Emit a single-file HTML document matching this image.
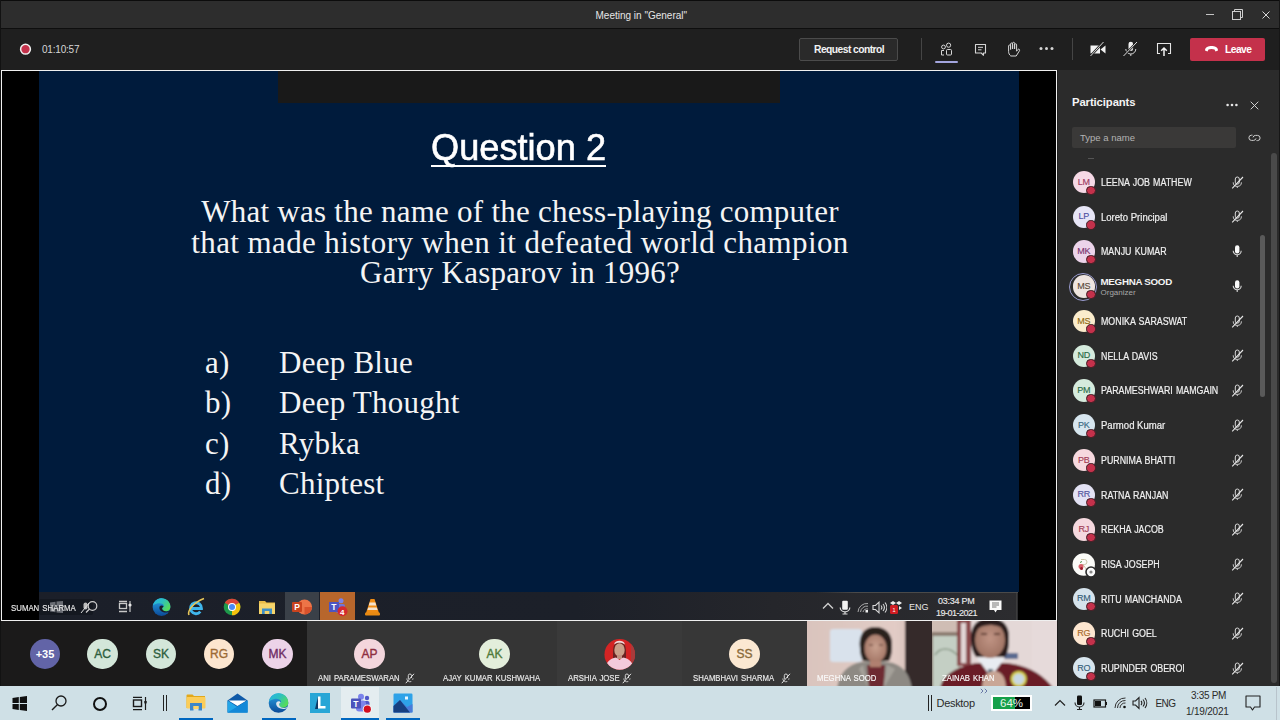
<!DOCTYPE html>
<html><head><meta charset="utf-8">
<style>
*{margin:0;padding:0;box-sizing:border-box}
html,body{width:1280px;height:720px;overflow:hidden;background:#1f1f1f;font-family:"Liberation Sans",sans-serif}
.a{position:absolute}
#title{left:0;top:0;width:1280px;height:28px;background:#2d2d2d;border-top:1px solid #0c0c0c}
#tbar{left:0;top:28px;width:1280px;height:42px;background:#1f1f1f;border-top:1px solid #0e0e0e}
#screen{left:1px;top:70px;width:1056px;height:551px;border:1px solid #f0f0f0;background:#000}
#navy{left:37px;top:0;width:980px;height:521px;background:#001b3c}
#darkrect{left:276px;top:0;width:502px;height:32px;background:#191919}
#panel{left:1058px;top:70px;width:222px;height:616px;background:#2b2b2b}
#gallery{left:0;top:621px;width:1058px;height:65px;background:#1b1a1a}
#wtb{left:0;top:686px;width:1280px;height:34px;background:#cfe0e6}
.t{position:absolute;white-space:nowrap}
.q{font-family:"Liberation Serif",serif;font-size:31px;line-height:31px;color:#f4f4f4;letter-spacing:0.25px}
</style></head><body>
<div id="title" class="a"></div>
<div id="tbar" class="a"></div>

<div class="t" style="left:595.5px;top:9.5px;font-size:10px;line-height:12px;color:#e6e6e6">Meeting in "General"</div>
<div class="a" style="left:1206px;top:13.5px;width:8px;height:1.3px;background:#c4c4c4"></div>
<svg class="a" style="left:1231px;top:8px" width="14" height="13"><rect x="1.5" y="3.5" width="8" height="8" fill="none" stroke="#cfcfcf" stroke-width="1"/><path d="M3.5 3.5V1.5H11.5V9.5H9.5" fill="none" stroke="#cfcfcf" stroke-width="1"/></svg>
<svg class="a" style="left:1261.5px;top:10.5px" width="8" height="8"><path d="M0.5 0.5L7.5 7.5M7.5 0.5L0.5 7.5" stroke="#d8d8d8" stroke-width="1"/></svg>
<!-- toolbar -->
<svg class="a" style="left:19px;top:43px" width="13" height="13"><circle cx="6.5" cy="6.2" r="4.9" fill="#c4314b" stroke="#f0f0f0" stroke-width="1.5"/></svg>
<div class="t" style="left:42px;top:44px;font-size:10px;line-height:11px;color:#d6d6d6;letter-spacing:-0.2px">01:10:57</div>
<div class="a" style="left:799px;top:38px;width:99px;height:23px;border:1px solid #4b4b4b;background:#2a2a2a;border-radius:2px"></div>
<div class="t" style="left:814px;top:43.5px;font-size:10.3px;line-height:12px;color:#f2f2f2;font-weight:bold;letter-spacing:-0.55px">Request control</div>
<div class="a" style="left:921px;top:38px;width:1px;height:22px;background:#454545"></div>
<svg class="a" style="left:939px;top:41px" width="15" height="16"><circle cx="4.5" cy="6" r="1.9" fill="none" stroke="#d6d6d6" stroke-width="1"/><circle cx="9.6" cy="4.2" r="2.1" fill="none" stroke="#d6d6d6" stroke-width="1"/><path d="M5 9.5H2.5V14H5" fill="none" stroke="#d6d6d6" stroke-width="1"/><rect x="7.5" y="8.5" width="5" height="5.5" rx="1" fill="none" stroke="#d6d6d6" stroke-width="1"/></svg>
<div class="a" style="left:935px;top:61px;width:23px;height:2px;background:#a3a5de;border-radius:1px"></div>
<svg class="a" style="left:973px;top:42px" width="15" height="15"><path d="M2.5 2.5H12.5V11H10.5V13.3L8.3 11H2.5z" fill="none" stroke="#d6d6d6" stroke-width="1.1" stroke-linejoin="round"/><path d="M5 5.3H10M5 7.8H8.5" stroke="#d6d6d6" stroke-width="1"/></svg>
<svg class="a" style="left:1006px;top:41px" width="15" height="16"><path d="M4.8 15C3.3 13.8 2.6 12.3 2.6 10.5V5a1 1 0 0 1 2 0V8.5V3a1 1 0 0 1 2 0V8V2.3a1 1 0 0 1 2 0V8V3.8a1 1 0 0 1 2 0V10.2L12 8.4a1 1 0 0 1 1.5 1.3L10.2 15z" fill="none" stroke="#d6d6d6" stroke-width="1" stroke-linejoin="round"/></svg>
<svg class="a" style="left:1039px;top:46px" width="15" height="5"><circle cx="2" cy="2.5" r="1.5" fill="#d6d6d6"/><circle cx="7.5" cy="2.5" r="1.5" fill="#d6d6d6"/><circle cx="13" cy="2.5" r="1.5" fill="#d6d6d6"/></svg>
<div class="a" style="left:1072px;top:38px;width:1px;height:22px;background:#454545"></div>
<svg class="a" style="left:1089px;top:41px" width="18" height="16"><path d="M1.5 4.5H11V12.5H1.5z" fill="#f2f2f2"/><path d="M11.5 8.5L16.5 4.5V12.5z" fill="#f2f2f2"/><path d="M1.5 15L14.5 1" stroke="#1f1f1f" stroke-width="2.4"/><path d="M1.5 15L14.5 1" stroke="#f2f2f2" stroke-width="0.9"/></svg>
<svg class="a" style="left:1122px;top:41px" width="18" height="16"><rect x="6.5" y="0.8" width="4.6" height="9.2" rx="2.3" fill="#f2f2f2"/><path d="M3.8 8a5 5 0 0 0 10 0" fill="none" stroke="#d6d6d6" stroke-width="1"/><path d="M8.8 13V15" stroke="#d6d6d6" stroke-width="1"/><path d="M1.5 15L15 1" stroke="#1f1f1f" stroke-width="2.2"/><path d="M1.5 15L15 1" stroke="#f2f2f2" stroke-width="0.9"/></svg>
<svg class="a" style="left:1156px;top:42px" width="16" height="15"><path d="M4 11.5H1.5V1.5H14.5V11.5H12" fill="none" stroke="#e6e6e6" stroke-width="1.1"/><path d="M8 14V6M5.2 8.8L8 6L10.8 8.8" fill="none" stroke="#f5f5f5" stroke-width="1.5"/></svg>
<div class="a" style="left:1190px;top:38px;width:75px;height:23px;background:#c4314b;border-radius:2px"></div>
<svg class="a" style="left:1204px;top:45px" width="15" height="8"><path d="M1 5.5C1 2 4.5 1 7.5 1S14 2 14 5.5L11.5 6.5L10.5 4.5C9 3.8 6 3.8 4.5 4.5L3.5 6.5z" fill="#fff"/></svg>
<div class="t" style="left:1225px;top:43.5px;font-size:10.3px;line-height:12px;color:#fff;font-weight:bold;letter-spacing:-0.55px">Leave</div>
<div id="screen" class="a">
  <div id="navy" class="a"></div>
  <div id="darkrect" class="a"></div>
</div>

<div class="t" style="left:431px;top:128px;font-size:37.5px;line-height:38px;color:#fff;-webkit-text-stroke:0.6px #fff;transform:scaleX(0.965);transform-origin:0 0">Question 2</div>
<div class="a" style="left:431px;top:165px;width:175px;height:2px;background:#fff"></div>
<div class="t q" style="left:0;width:1040px;text-align:center;top:196.4px">What was the name of the chess-playing computer</div>
<div class="t q" style="left:0;width:1040px;text-align:center;top:226.8px;letter-spacing:0.4px">that made history when it defeated world champion</div>
<div class="t q" style="left:0;width:1040px;text-align:center;top:256.5px">Garry Kasparov in 1996?</div>
<div class="t q" style="left:205px;top:346.7px">a)</div><div class="t q" style="left:279px;top:346.7px">Deep Blue</div>
<div class="t q" style="left:205px;top:387.3px">b)</div><div class="t q" style="left:279px;top:387.3px">Deep Thought</div>
<div class="t q" style="left:205px;top:427.7px">c)</div><div class="t q" style="left:279px;top:427.7px">Rybka</div>
<div class="t q" style="left:205px;top:468.3px">d)</div><div class="t q" style="left:279px;top:468.3px">Chiptest</div>

<!-- screen taskbar -->
<div class="a" style="left:39px;top:592px;width:979px;height:28px;background:linear-gradient(to right,#1b1f29 0%,#1c2029 55%,#25262b 75%,#2c2c2f 100%)"></div>
<div class="a" style="left:1016px;top:592px;width:1px;height:28px;background:#3c3c3c"></div>
<div class="a" style="left:816px;top:592px;width:202px;height:1px;background:linear-gradient(to right,rgba(70,70,70,0),#4a4a4a 20%,#4a4a4a)"></div>
<!-- name label -->
<div class="a" style="left:39px;top:599px;width:54px;height:16px;background:#141820;border-radius:2px"></div>
<svg class="a" style="left:50px;top:601px" width="13" height="12"><path d="M0 1.5L5.5 0.8V5.6H0ZM6.5 0.6L13 0V5.6H6.5ZM0 6.4H5.5V11.2L0 10.5ZM6.5 6.4H13V12L6.5 11.4Z" fill="#6b6e75"/></svg>
<div class="t" style="left:10.5px;top:602.5px;font-size:9px;line-height:11px;-webkit-text-stroke:0.15px currentColor;color:#e8e8e8;letter-spacing:0;word-spacing:1px;transform:scaleX(0.87);transform-origin:0 0">SUMAN SHARMA</div>
<svg class="a" style="left:80px;top:600px" width="18" height="15"><circle cx="12.5" cy="6" r="4.3" fill="none" stroke="#cfcfcf" stroke-width="1.2"/><path d="M9.5 9L6 12.5" stroke="#cfcfcf" stroke-width="1.3"/><path d="M3.5 4.5a2 2 0 0 1 4 0v3a2 2 0 0 1-4 0z" fill="#bbb"/><path d="M1 13L9 3" stroke="#ddd" stroke-width="1"/></svg>
<!-- task view -->
<svg class="a" style="left:118px;top:600px" width="14" height="13"><path d="M1 1.5H9M1 11.5H9" stroke="#c8c8c8" stroke-width="1.3"/><rect x="1.5" y="3.5" width="7" height="5" fill="none" stroke="#c8c8c8" stroke-width="1.3"/><path d="M12 1V12" stroke="#c8c8c8" stroke-width="1.2"/><circle cx="12" cy="5" r="1.6" fill="#e8e8e8"/></svg>
<!-- edge -->
<svg class="a" style="left:152px;top:597.5px" width="19" height="18.2" viewBox="0 0 21.4 20.4"><defs><linearGradient id="ega" x1="0" y1="0" x2="0" y2="1"><stop offset="0" stop-color="#2aa6e6"/><stop offset="1" stop-color="#0b4a98"/></linearGradient><linearGradient id="egb" x1="0" y1="0" x2="1" y2="0.6"><stop offset="0" stop-color="#27b4e4"/><stop offset="0.5" stop-color="#2cc0c0"/><stop offset="1" stop-color="#56dc5a"/></linearGradient></defs><circle cx="10.7" cy="10.2" r="10" fill="url(#ega)"/><path d="M1 8.5C2.5 3.2 6.3 0.2 10.7 0.2C16.5 0.2 20.7 4.6 20.7 9.8C20.7 13.2 18.2 15 15.3 15C12.3 15 10.8 13.2 11.4 11.6C12 10 13.6 9.8 13.3 8.3C12.8 6.3 9.5 5.4 6.5 6C4.2 6.5 2.3 7.3 1 8.5z" fill="url(#egb)"/><path d="M8.3 10.8C8.3 9.3 9.4 8.3 10.8 8.3C12 8.3 12.8 9 13 9.8C11.8 10.4 11.2 11.2 11.4 12.2C11.9 14.3 14.3 15.3 16.5 15.2C18 15.1 19.4 14.6 20.3 13.8C19.6 15.2 18.2 16.1 16.5 16.2C12.3 16.5 8.3 14.5 8.3 10.8z" fill="#1b1f29"/></svg>
<!-- ie -->
<svg class="a" style="left:187px;top:597px" width="19" height="20"><path d="M4 11.5h10.5a5.5 5.5 0 1 0 -1.2 3.2" fill="none" stroke="#3fb6ec" stroke-width="2.8"/><path d="M2 18C0 14 7 5 17 1.5" fill="none" stroke="#e7c75a" stroke-width="1.6"/></svg>
<!-- chrome -->
<svg class="a" style="left:223px;top:598px" width="18" height="18"><circle cx="9" cy="9" r="8.3" fill="#1e9a4b"/><path d="M9 9L1.8 4.8A8.3 8.3 0 0 1 16.2 4.8Z" fill="#db4437"/><path d="M9 9L16.2 4.8A8.3 8.3 0 0 1 9 17.3Z" fill="#f4c20d"/><circle cx="9" cy="9" r="4" fill="#fff"/><circle cx="9" cy="9" r="3" fill="#4a8af4"/></svg>
<!-- explorer -->
<svg class="a" style="left:259px;top:600px" width="16" height="14"><path d="M0 1h6l1.5 1.5H16V14H0z" fill="#e9bc48"/><rect x="0" y="3.5" width="16" height="10.5" fill="#f5d46b"/><path d="M3 14V8.5H13V14H10.3V11H5.7V14z" fill="#3e8fc7"/></svg>
<!-- powerpoint -->
<div class="a" style="left:285px;top:592px;width:34px;height:28px;background:#3a4048"></div>
<svg class="a" style="left:291px;top:599px" width="22" height="16"><circle cx="13.5" cy="8" r="7.6" fill="#ed7447"/><path d="M13.5 8H21A7.6 7.6 0 0 1 13.5 15.6z" fill="#d9522c"/><rect x="1" y="3" width="10" height="10" rx="1" fill="#c9431e"/><text x="3.2" y="11.3" font-size="8.5" font-weight="bold" fill="#fff" font-family="Liberation Sans">P</text></svg>
<!-- teams -->
<div class="a" style="left:320px;top:592px;width:35px;height:28px;background:#b7662c"></div>
<svg class="a" style="left:327px;top:598px" width="22" height="19"><circle cx="14" cy="2.8" r="2.5" fill="#7b83eb"/><rect x="9" y="6" width="9" height="9" rx="2" fill="#6f77d8"/><rect x="2" y="4" width="10" height="10" fill="#4d55c1"/><text x="4.2" y="12.2" font-size="8.5" font-weight="bold" fill="#fff" font-family="Liberation Sans">T</text><circle cx="15.5" cy="13.3" r="5" fill="#d42a2e"/><text x="13" y="16.6" font-size="8" font-weight="bold" fill="#fff" font-family="Liberation Sans">4</text></svg>
<!-- vlc -->
<svg class="a" style="left:365px;top:598px" width="15" height="18"><path d="M5.5 1H9.5L14 15H1z" fill="#f08c14"/><path d="M4.6 4.5H10.4L11.2 7.5H3.8zM3.2 9.5H11.8L12.6 12H2.4z" fill="#f3e3cf"/><rect x="0" y="14.5" width="15" height="3" rx="1" fill="#e88a12"/></svg>
<!-- tray -->
<svg class="a" style="left:822px;top:602px" width="12" height="8"><path d="M1 6.5L6 1.5L11 6.5" fill="none" stroke="#cfcfcf" stroke-width="1.3"/></svg>
<svg class="a" style="left:839px;top:600px" width="12" height="15"><rect x="3.2" y="0.8" width="5.6" height="9" rx="1" fill="#f2f2f2"/><path d="M1.2 7.5a4.8 4.3 0 0 0 9.6 0" fill="none" stroke="#d8d8d8" stroke-width="1.2"/><path d="M6 12V13.5M3.5 14H8.5" stroke="#d8d8d8" stroke-width="1.2"/></svg>
<svg class="a" style="left:857px;top:602px" width="12" height="11"><path d="M1 10a9 9 0 0 1 10 -8.5M3.5 10a6.5 6.5 0 0 1 7.5 -5.8M6 10a4 4 0 0 1 5 -3" fill="none" stroke="#aaa" stroke-width="1"/><rect x="8.5" y="8" width="2.5" height="2.5" fill="#eee"/></svg>
<svg class="a" style="left:872px;top:601px" width="15" height="13"><path d="M1 4.5H3.5L7 1.2V11.8L3.5 8.5H1z" fill="none" stroke="#d9d9d9" stroke-width="1.1"/><path d="M9 4.5a3 3 0 0 1 0 4M11 3a5.5 5.5 0 0 1 0 7M13 1.5a8 8 0 0 1 0 10" fill="none" stroke="#d9d9d9" stroke-width="1.1"/></svg>
<svg class="a" style="left:889px;top:600px" width="14" height="15"><path d="M4 1L7 3L4 5L1 3zM10 1L13 3L10 5L7 3zM10 6L13 8L10 10z" fill="#eee"/><rect x="1" y="5" width="8" height="9" rx="1.5" fill="#d01c22"/><text x="3.6" y="11.8" font-size="5.5" fill="#fff" font-family="Liberation Sans">1</text></svg>
<div class="t" style="left:909px;top:602px;font-size:9px;line-height:11px;color:#e8e8e8">ENG</div>
<div class="t" style="left:938px;top:595.8px;font-size:9px;line-height:11px;-webkit-text-stroke:0.15px currentColor;color:#e8e8e8;letter-spacing:-0.25px">03:34 PM</div>
<div class="t" style="left:936px;top:608px;font-size:9px;line-height:11px;-webkit-text-stroke:0.15px currentColor;color:#e8e8e8;letter-spacing:-0.5px">19-01-2021</div>
<svg class="a" style="left:989px;top:600px" width="13" height="14"><path d="M0.5 0.5H12.5V10H8L6.5 12.5L5 10H0.5z" fill="#fafafa"/><path d="M3 3H10M3 5H10M3 7H7.5" stroke="#777" stroke-width="1"/></svg>
<div id="panel" class="a"></div>
<div class="t" style="left:1072px;top:95.3px;font-size:11.3px;line-height:14px;color:#f4f4f4;font-weight:bold;letter-spacing:-0.1px">Participants</div>
<svg class="a" style="left:1226px;top:103px" width="12" height="4"><circle cx="1.6" cy="2" r="1.3" fill="#e6e6e6"/><circle cx="6" cy="2" r="1.3" fill="#e6e6e6"/><circle cx="10.4" cy="2" r="1.3" fill="#e6e6e6"/></svg>
<svg class="a" style="left:1250px;top:101px" width="9" height="9"><path d="M0.7 0.7L8.3 8.3M8.3 0.7L0.7 8.3" stroke="#cfcfcf" stroke-width="1"/></svg>
<div class="a" style="left:1072px;top:127px;width:164px;height:21px;background:#3a3938;border-radius:2px"></div>
<div class="t" style="left:1080px;top:132.2px;font-size:9.5px;line-height:11px;color:#b3b3b3">Type a name</div>
<svg class="a" style="left:1248px;top:133px" width="13" height="10"><path d="M4.5 2.2H3.5a2.6 2.6 0 0 0 0 5.2h2a2.6 2.6 0 0 0 2.5 -2" fill="none" stroke="#cfcfcf" stroke-width="1"/><path d="M8.5 7.6h1a2.6 2.6 0 0 0 0 -5.2h-2a2.6 2.6 0 0 0 -2.5 2" fill="none" stroke="#cfcfcf" stroke-width="1"/></svg>
<div class="a" style="left:1271px;top:153px;width:6px;height:530px;background:#4a4a4a;border-radius:3px"></div>
<div class="a" style="left:1260px;top:235px;width:5px;height:162px;background:#5a5a5a;border-radius:2.5px"></div>
<div class="a" style="left:1088px;top:158px;width:6px;height:1px;background:#555"></div>
<div class="a" style="left:1072.5px;top:171.0px;width:22.4px;height:22.4px;border-radius:50%;background:#f6d9e6"></div>
<div class="t" style="left:1072.5px;width:22.4px;text-align:center;top:176.7px;font-size:9px;line-height:11px;-webkit-text-stroke:0.15px currentColor;color:#9c3a62;letter-spacing:-0.2px">LM</div>
<div class="a" style="left:1086.3px;top:185.5px;width:9.4px;height:9.4px;border-radius:50%;background:#c4314b;border:1.4px solid #3d1e24"></div>
<div class="t" style="left:1100.5px;top:177.0px;font-size:10px;line-height:11px;color:#f0f0f0;letter-spacing:0;word-spacing:0.8px;transform:scaleX(0.885);transform-origin:0 0;-webkit-text-stroke:0.2px #f0f0f0">LEENA JOB MATHEW</div>
<svg class="a" style="left:1231px;top:175.7px" width="13" height="13"><rect x="4.3" y="1" width="4" height="7.2" rx="2" fill="none" stroke="#d8d8d8" stroke-width="1"/><path d="M2.2 6.3a4.1 4.1 0 0 0 8.2 0" fill="none" stroke="#c8c8c8" stroke-width="1"/><path d="M6.3 10.4V12" stroke="#c8c8c8" stroke-width="1"/><path d="M1.2 12.3L12 1" stroke="#e8e8e8" stroke-width="1.1"/></svg>
<div class="a" style="left:1072.5px;top:205.7px;width:22.4px;height:22.4px;border-radius:50%;background:#e7e5f6"></div>
<div class="t" style="left:1072.5px;width:22.4px;text-align:center;top:211.4px;font-size:9px;line-height:11px;-webkit-text-stroke:0.15px currentColor;color:#4f52a3;letter-spacing:-0.2px">LP</div>
<div class="a" style="left:1086.3px;top:220.2px;width:9.4px;height:9.4px;border-radius:50%;background:#c4314b;border:1.4px solid #3d1e24"></div>
<div class="t" style="left:1100.5px;top:211.7px;font-size:10px;line-height:11px;color:#f0f0f0;letter-spacing:0;transform:scaleX(0.955);transform-origin:0 0;-webkit-text-stroke:0.2px #f0f0f0">Loreto Principal</div>
<svg class="a" style="left:1231px;top:210.4px" width="13" height="13"><rect x="4.3" y="1" width="4" height="7.2" rx="2" fill="none" stroke="#d8d8d8" stroke-width="1"/><path d="M2.2 6.3a4.1 4.1 0 0 0 8.2 0" fill="none" stroke="#c8c8c8" stroke-width="1"/><path d="M6.3 10.4V12" stroke="#c8c8c8" stroke-width="1"/><path d="M1.2 12.3L12 1" stroke="#e8e8e8" stroke-width="1.1"/></svg>
<div class="a" style="left:1072.5px;top:240.4px;width:22.4px;height:22.4px;border-radius:50%;background:#ecd4ea"></div>
<div class="t" style="left:1072.5px;width:22.4px;text-align:center;top:246.1px;font-size:9px;line-height:11px;-webkit-text-stroke:0.15px currentColor;color:#7a3470;letter-spacing:-0.2px">MK</div>
<div class="a" style="left:1086.3px;top:254.9px;width:9.4px;height:9.4px;border-radius:50%;background:#c4314b;border:1.4px solid #3d1e24"></div>
<div class="t" style="left:1100.5px;top:246.4px;font-size:10px;line-height:11px;color:#f0f0f0;letter-spacing:0;word-spacing:0.8px;transform:scaleX(0.885);transform-origin:0 0;-webkit-text-stroke:0.2px #f0f0f0">MANJU KUMAR</div>
<svg class="a" style="left:1231px;top:245.1px" width="13" height="13"><rect x="4" y="0.3" width="4.4" height="8.2" rx="2.2" fill="#fafafa"/><path d="M2.2 5.8a4 4 0 0 0 8 0" fill="none" stroke="#d8d8d8" stroke-width="1.1"/><path d="M6.2 10V12" stroke="#d8d8d8" stroke-width="1.1"/></svg>
<div class="a" style="left:1069.2px;top:272.8px;width:28px;height:28px;border-radius:50%;border:1.3px solid #9a9cd0"></div>
<div class="a" style="left:1072.5px;top:275.2px;width:22.4px;height:22.4px;border-radius:50%;background:#efe5e0"></div>
<div class="t" style="left:1072.5px;width:22.4px;text-align:center;top:280.9px;font-size:9px;line-height:11px;-webkit-text-stroke:0.15px currentColor;color:#5c4b3c;letter-spacing:-0.2px">MS</div>
<div class="a" style="left:1086.3px;top:289.7px;width:9.4px;height:9.4px;border-radius:50%;background:#c4314b;border:1.4px solid #3d1e24"></div>
<div class="t" style="left:1100.5px;top:276.4px;font-size:9.8px;line-height:11px;color:#f4f4f4;font-weight:bold;letter-spacing:-0.3px">MEGHNA SOOD</div>
<div class="t" style="left:1100.5px;top:287.9px;font-size:8px;line-height:10px;color:#a8a8a8">Organizer</div>
<svg class="a" style="left:1231px;top:279.9px" width="13" height="13"><rect x="4" y="0.3" width="4.4" height="8.2" rx="2.2" fill="#fafafa"/><path d="M2.2 5.8a4 4 0 0 0 8 0" fill="none" stroke="#d8d8d8" stroke-width="1.1"/><path d="M6.2 10V12" stroke="#d8d8d8" stroke-width="1.1"/></svg>
<div class="a" style="left:1072.5px;top:309.9px;width:22.4px;height:22.4px;border-radius:50%;background:#fbeccc"></div>
<div class="t" style="left:1072.5px;width:22.4px;text-align:center;top:315.6px;font-size:9px;line-height:11px;-webkit-text-stroke:0.15px currentColor;color:#8f6a14;letter-spacing:-0.2px">MS</div>
<div class="a" style="left:1086.3px;top:324.4px;width:9.4px;height:9.4px;border-radius:50%;background:#c4314b;border:1.4px solid #3d1e24"></div>
<div class="t" style="left:1100.5px;top:315.9px;font-size:10px;line-height:11px;color:#f0f0f0;letter-spacing:0;word-spacing:0.8px;transform:scaleX(0.885);transform-origin:0 0;-webkit-text-stroke:0.2px #f0f0f0">MONIKA SARASWAT</div>
<svg class="a" style="left:1231px;top:314.6px" width="13" height="13"><rect x="4.3" y="1" width="4" height="7.2" rx="2" fill="none" stroke="#d8d8d8" stroke-width="1"/><path d="M2.2 6.3a4.1 4.1 0 0 0 8.2 0" fill="none" stroke="#c8c8c8" stroke-width="1"/><path d="M6.3 10.4V12" stroke="#c8c8c8" stroke-width="1"/><path d="M1.2 12.3L12 1" stroke="#e8e8e8" stroke-width="1.1"/></svg>
<div class="a" style="left:1072.5px;top:344.6px;width:22.4px;height:22.4px;border-radius:50%;background:#d5ebdd"></div>
<div class="t" style="left:1072.5px;width:22.4px;text-align:center;top:350.3px;font-size:9px;line-height:11px;-webkit-text-stroke:0.15px currentColor;color:#2a6a46;letter-spacing:-0.2px">ND</div>
<div class="a" style="left:1086.3px;top:359.1px;width:9.4px;height:9.4px;border-radius:50%;background:#c4314b;border:1.4px solid #3d1e24"></div>
<div class="t" style="left:1100.5px;top:350.6px;font-size:10px;line-height:11px;color:#f0f0f0;letter-spacing:0;word-spacing:0.8px;transform:scaleX(0.885);transform-origin:0 0;-webkit-text-stroke:0.2px #f0f0f0">NELLA DAVIS</div>
<svg class="a" style="left:1231px;top:349.3px" width="13" height="13"><rect x="4.3" y="1" width="4" height="7.2" rx="2" fill="none" stroke="#d8d8d8" stroke-width="1"/><path d="M2.2 6.3a4.1 4.1 0 0 0 8.2 0" fill="none" stroke="#c8c8c8" stroke-width="1"/><path d="M6.3 10.4V12" stroke="#c8c8c8" stroke-width="1"/><path d="M1.2 12.3L12 1" stroke="#e8e8e8" stroke-width="1.1"/></svg>
<div class="a" style="left:1072.5px;top:379.3px;width:22.4px;height:22.4px;border-radius:50%;background:#d5ebdd"></div>
<div class="t" style="left:1072.5px;width:22.4px;text-align:center;top:385.0px;font-size:9px;line-height:11px;-webkit-text-stroke:0.15px currentColor;color:#2a6a46;letter-spacing:-0.2px">PM</div>
<div class="a" style="left:1086.3px;top:393.8px;width:9.4px;height:9.4px;border-radius:50%;background:#c4314b;border:1.4px solid #3d1e24"></div>
<div class="t" style="left:1100.5px;top:385.3px;font-size:10px;line-height:11px;color:#f0f0f0;letter-spacing:0;word-spacing:0.8px;transform:scaleX(0.885);transform-origin:0 0;-webkit-text-stroke:0.2px #f0f0f0">PARAMESHWARI MAMGAIN</div>
<svg class="a" style="left:1231px;top:384.0px" width="13" height="13"><rect x="4.3" y="1" width="4" height="7.2" rx="2" fill="none" stroke="#d8d8d8" stroke-width="1"/><path d="M2.2 6.3a4.1 4.1 0 0 0 8.2 0" fill="none" stroke="#c8c8c8" stroke-width="1"/><path d="M6.3 10.4V12" stroke="#c8c8c8" stroke-width="1"/><path d="M1.2 12.3L12 1" stroke="#e8e8e8" stroke-width="1.1"/></svg>
<div class="a" style="left:1072.5px;top:414.0px;width:22.4px;height:22.4px;border-radius:50%;background:#d7e6ef"></div>
<div class="t" style="left:1072.5px;width:22.4px;text-align:center;top:419.7px;font-size:9px;line-height:11px;-webkit-text-stroke:0.15px currentColor;color:#3b6a84;letter-spacing:-0.2px">PK</div>
<div class="a" style="left:1086.3px;top:428.5px;width:9.4px;height:9.4px;border-radius:50%;background:#c4314b;border:1.4px solid #3d1e24"></div>
<div class="t" style="left:1100.5px;top:420.0px;font-size:10px;line-height:11px;color:#f0f0f0;letter-spacing:0;transform:scaleX(0.955);transform-origin:0 0;-webkit-text-stroke:0.2px #f0f0f0">Parmod Kumar</div>
<svg class="a" style="left:1231px;top:418.7px" width="13" height="13"><rect x="4.3" y="1" width="4" height="7.2" rx="2" fill="none" stroke="#d8d8d8" stroke-width="1"/><path d="M2.2 6.3a4.1 4.1 0 0 0 8.2 0" fill="none" stroke="#c8c8c8" stroke-width="1"/><path d="M6.3 10.4V12" stroke="#c8c8c8" stroke-width="1"/><path d="M1.2 12.3L12 1" stroke="#e8e8e8" stroke-width="1.1"/></svg>
<div class="a" style="left:1072.5px;top:448.8px;width:22.4px;height:22.4px;border-radius:50%;background:#f7d9df"></div>
<div class="t" style="left:1072.5px;width:22.4px;text-align:center;top:454.5px;font-size:9px;line-height:11px;-webkit-text-stroke:0.15px currentColor;color:#a33f58;letter-spacing:-0.2px">PB</div>
<div class="a" style="left:1086.3px;top:463.3px;width:9.4px;height:9.4px;border-radius:50%;background:#c4314b;border:1.4px solid #3d1e24"></div>
<div class="t" style="left:1100.5px;top:454.8px;font-size:10px;line-height:11px;color:#f0f0f0;letter-spacing:0;word-spacing:0.8px;transform:scaleX(0.885);transform-origin:0 0;-webkit-text-stroke:0.2px #f0f0f0">PURNIMA BHATTI</div>
<svg class="a" style="left:1231px;top:453.5px" width="13" height="13"><rect x="4.3" y="1" width="4" height="7.2" rx="2" fill="none" stroke="#d8d8d8" stroke-width="1"/><path d="M2.2 6.3a4.1 4.1 0 0 0 8.2 0" fill="none" stroke="#c8c8c8" stroke-width="1"/><path d="M6.3 10.4V12" stroke="#c8c8c8" stroke-width="1"/><path d="M1.2 12.3L12 1" stroke="#e8e8e8" stroke-width="1.1"/></svg>
<div class="a" style="left:1072.5px;top:483.5px;width:22.4px;height:22.4px;border-radius:50%;background:#e3e2f4"></div>
<div class="t" style="left:1072.5px;width:22.4px;text-align:center;top:489.2px;font-size:9px;line-height:11px;-webkit-text-stroke:0.15px currentColor;color:#55579f;letter-spacing:-0.2px">RR</div>
<div class="a" style="left:1086.3px;top:498.0px;width:9.4px;height:9.4px;border-radius:50%;background:#c4314b;border:1.4px solid #3d1e24"></div>
<div class="t" style="left:1100.5px;top:489.5px;font-size:10px;line-height:11px;color:#f0f0f0;letter-spacing:0;word-spacing:0.8px;transform:scaleX(0.885);transform-origin:0 0;-webkit-text-stroke:0.2px #f0f0f0">RATNA RANJAN</div>
<svg class="a" style="left:1231px;top:488.2px" width="13" height="13"><rect x="4.3" y="1" width="4" height="7.2" rx="2" fill="none" stroke="#d8d8d8" stroke-width="1"/><path d="M2.2 6.3a4.1 4.1 0 0 0 8.2 0" fill="none" stroke="#c8c8c8" stroke-width="1"/><path d="M6.3 10.4V12" stroke="#c8c8c8" stroke-width="1"/><path d="M1.2 12.3L12 1" stroke="#e8e8e8" stroke-width="1.1"/></svg>
<div class="a" style="left:1072.5px;top:518.2px;width:22.4px;height:22.4px;border-radius:50%;background:#f5d8de"></div>
<div class="t" style="left:1072.5px;width:22.4px;text-align:center;top:523.9px;font-size:9px;line-height:11px;-webkit-text-stroke:0.15px currentColor;color:#a33f58;letter-spacing:-0.2px">RJ</div>
<div class="a" style="left:1086.3px;top:532.7px;width:9.4px;height:9.4px;border-radius:50%;background:#c4314b;border:1.4px solid #3d1e24"></div>
<div class="t" style="left:1100.5px;top:524.2px;font-size:10px;line-height:11px;color:#f0f0f0;letter-spacing:0;word-spacing:0.8px;transform:scaleX(0.885);transform-origin:0 0;-webkit-text-stroke:0.2px #f0f0f0">REKHA JACOB</div>
<svg class="a" style="left:1231px;top:522.9px" width="13" height="13"><rect x="4.3" y="1" width="4" height="7.2" rx="2" fill="none" stroke="#d8d8d8" stroke-width="1"/><path d="M2.2 6.3a4.1 4.1 0 0 0 8.2 0" fill="none" stroke="#c8c8c8" stroke-width="1"/><path d="M6.3 10.4V12" stroke="#c8c8c8" stroke-width="1"/><path d="M1.2 12.3L12 1" stroke="#e8e8e8" stroke-width="1.1"/></svg>
<svg class="a" style="left:1072px;top:552.6px" width="24" height="24"><circle cx="11.75" cy="11.5" r="11.2" fill="#fbfbf8"/><path d="M9 6.5h3.5a2.5 2.5 0 0 1 0 5H9M11 11.5l3.5 5" fill="none" stroke="#c9c4a8" stroke-width="1"/><circle cx="9" cy="13.5" r="2.5" fill="#d9606a"/><circle cx="9.5" cy="15.5" r="1.5" fill="#9a1a2a"/><path d="M8.5 10l1-2" stroke="#4a8a4a" stroke-width="1"/></svg>
<svg class="a" style="left:1085px;top:566.4px" width="12" height="12"><circle cx="6" cy="6" r="5" fill="#fafafa" stroke="#2b2b2b" stroke-width="1.6"/><circle cx="6" cy="6" r="1.6" fill="#888"/></svg>
<div class="t" style="left:1100.5px;top:558.9px;font-size:10px;line-height:11px;color:#f0f0f0;letter-spacing:0;word-spacing:0.8px;transform:scaleX(0.885);transform-origin:0 0;-webkit-text-stroke:0.2px #f0f0f0">RISA JOSEPH</div>
<svg class="a" style="left:1231px;top:557.6px" width="13" height="13"><rect x="4.3" y="1" width="4" height="7.2" rx="2" fill="none" stroke="#d8d8d8" stroke-width="1"/><path d="M2.2 6.3a4.1 4.1 0 0 0 8.2 0" fill="none" stroke="#c8c8c8" stroke-width="1"/><path d="M6.3 10.4V12" stroke="#c8c8c8" stroke-width="1"/><path d="M1.2 12.3L12 1" stroke="#e8e8e8" stroke-width="1.1"/></svg>
<div class="a" style="left:1072.5px;top:587.6px;width:22.4px;height:22.4px;border-radius:50%;background:#d5e3ec"></div>
<div class="t" style="left:1072.5px;width:22.4px;text-align:center;top:593.3px;font-size:9px;line-height:11px;-webkit-text-stroke:0.15px currentColor;color:#365f7a;letter-spacing:-0.2px">RM</div>
<div class="a" style="left:1086.3px;top:602.1px;width:9.4px;height:9.4px;border-radius:50%;background:#c4314b;border:1.4px solid #3d1e24"></div>
<div class="t" style="left:1100.5px;top:593.6px;font-size:10px;line-height:11px;color:#f0f0f0;letter-spacing:0;word-spacing:0.8px;transform:scaleX(0.885);transform-origin:0 0;-webkit-text-stroke:0.2px #f0f0f0">RITU MANCHANDA</div>
<svg class="a" style="left:1231px;top:592.3px" width="13" height="13"><rect x="4.3" y="1" width="4" height="7.2" rx="2" fill="none" stroke="#d8d8d8" stroke-width="1"/><path d="M2.2 6.3a4.1 4.1 0 0 0 8.2 0" fill="none" stroke="#c8c8c8" stroke-width="1"/><path d="M6.3 10.4V12" stroke="#c8c8c8" stroke-width="1"/><path d="M1.2 12.3L12 1" stroke="#e8e8e8" stroke-width="1.1"/></svg>
<div class="a" style="left:1072.5px;top:622.4px;width:22.4px;height:22.4px;border-radius:50%;background:#fde6d0"></div>
<div class="t" style="left:1072.5px;width:22.4px;text-align:center;top:628.1px;font-size:9px;line-height:11px;-webkit-text-stroke:0.15px currentColor;color:#a86a2c;letter-spacing:-0.2px">RG</div>
<div class="a" style="left:1086.3px;top:636.9px;width:9.4px;height:9.4px;border-radius:50%;background:#c4314b;border:1.4px solid #3d1e24"></div>
<div class="t" style="left:1100.5px;top:628.4px;font-size:10px;line-height:11px;color:#f0f0f0;letter-spacing:0;word-spacing:0.8px;transform:scaleX(0.885);transform-origin:0 0;-webkit-text-stroke:0.2px #f0f0f0">RUCHI GOEL</div>
<svg class="a" style="left:1231px;top:627.1px" width="13" height="13"><rect x="4.3" y="1" width="4" height="7.2" rx="2" fill="none" stroke="#d8d8d8" stroke-width="1"/><path d="M2.2 6.3a4.1 4.1 0 0 0 8.2 0" fill="none" stroke="#c8c8c8" stroke-width="1"/><path d="M6.3 10.4V12" stroke="#c8c8c8" stroke-width="1"/><path d="M1.2 12.3L12 1" stroke="#e8e8e8" stroke-width="1.1"/></svg>
<div class="a" style="left:1072.5px;top:657.1px;width:22.4px;height:22.4px;border-radius:50%;background:#d7e5ee"></div>
<div class="t" style="left:1072.5px;width:22.4px;text-align:center;top:662.8px;font-size:9px;line-height:11px;-webkit-text-stroke:0.15px currentColor;color:#365f7a;letter-spacing:-0.2px">RO</div>
<div class="a" style="left:1086.3px;top:671.6px;width:9.4px;height:9.4px;border-radius:50%;background:#c4314b;border:1.4px solid #3d1e24"></div>
<div class="t" style="left:1100.5px;top:663.1px;font-size:10px;line-height:11px;color:#f0f0f0;letter-spacing:0;word-spacing:0.8px;transform:scaleX(0.885);transform-origin:0 0;-webkit-text-stroke:0.2px #f0f0f0">RUPINDER OBEROI</div>
<svg class="a" style="left:1231px;top:661.8px" width="13" height="13"><rect x="4.3" y="1" width="4" height="7.2" rx="2" fill="none" stroke="#d8d8d8" stroke-width="1"/><path d="M2.2 6.3a4.1 4.1 0 0 0 8.2 0" fill="none" stroke="#c8c8c8" stroke-width="1"/><path d="M6.3 10.4V12" stroke="#c8c8c8" stroke-width="1"/><path d="M1.2 12.3L12 1" stroke="#e8e8e8" stroke-width="1.1"/></svg>
<div id="gallery" class="a"></div>
<!-- gallery -->
<div class="a" style="left:0;top:621px;width:307px;height:65px;background:#1b1a1a"></div>
<div class="a" style="left:307px;top:621px;width:250px;height:65px;background:#353535"></div>
<div class="a" style="left:557px;top:621px;width:125px;height:65px;background:#3a3a3a"></div>
<div class="a" style="left:682px;top:621px;width:125px;height:65px;background:#373737"></div>
<div class="a" style="left:29.8px;top:638.5px;width:30.4px;height:30.4px;border-radius:50%;background:#6264a7"></div>
<div class="t" style="left:25.0px;width:40px;text-align:center;top:646.5px;font-size:11px;line-height:14px;color:#fff;font-weight:bold;">+35</div>
<div class="a" style="left:87.3px;top:638.5px;width:30.4px;height:30.4px;border-radius:50%;background:#d3e6d9"></div>
<div class="t" style="left:82.5px;width:40px;text-align:center;top:646.5px;font-size:12px;line-height:14px;-webkit-text-stroke:0.35px currentColor;color:#2d5e3e;">AC</div>
<div class="a" style="left:145.8px;top:638.5px;width:30.4px;height:30.4px;border-radius:50%;background:#d3e6d9"></div>
<div class="t" style="left:141.0px;width:40px;text-align:center;top:646.5px;font-size:12px;line-height:14px;-webkit-text-stroke:0.35px currentColor;color:#2d5e3e;">SK</div>
<div class="a" style="left:203.8px;top:638.5px;width:30.4px;height:30.4px;border-radius:50%;background:#fde6cf"></div>
<div class="t" style="left:199.0px;width:40px;text-align:center;top:646.5px;font-size:12px;line-height:14px;-webkit-text-stroke:0.35px currentColor;color:#9c6a34;">RG</div>
<div class="a" style="left:262.3px;top:638.5px;width:30.4px;height:30.4px;border-radius:50%;background:#ecd3e8"></div>
<div class="t" style="left:257.5px;width:40px;text-align:center;top:646.5px;font-size:12px;line-height:14px;-webkit-text-stroke:0.35px currentColor;color:#6e2d65;">MK</div>
<div class="a" style="left:354.3px;top:638.5px;width:30.4px;height:30.4px;border-radius:50%;background:#f3d6dc"></div>
<div class="t" style="left:349.5px;width:40px;text-align:center;top:646.5px;font-size:12px;line-height:14px;-webkit-text-stroke:0.35px currentColor;color:#8e2f40;">AP</div>
<div class="a" style="left:479.3px;top:638.5px;width:30.4px;height:30.4px;border-radius:50%;background:#e3eedb"></div>
<div class="t" style="left:474.5px;width:40px;text-align:center;top:646.5px;font-size:12px;line-height:14px;-webkit-text-stroke:0.35px currentColor;color:#4f7a3a;">AK</div>
<div class="a" style="left:729.3px;top:638.5px;width:30.4px;height:30.4px;border-radius:50%;background:#fbe8d2"></div>
<div class="t" style="left:724.5px;width:40px;text-align:center;top:646.5px;font-size:12px;line-height:14px;-webkit-text-stroke:0.35px currentColor;color:#8a6a3a;">SS</div>
<svg class="a" style="left:604px;top:638.5px" width="31.5" height="31"><defs><clipPath id="ac"><circle cx="15.75" cy="15.4" r="15.3"/></clipPath><filter id="ab"><feGaussianBlur stdDeviation="0.7"/></filter></defs><g clip-path="url(#ac)"><rect width="32" height="32" fill="#d42424"/><g filter="url(#ab)"><rect x="27" y="0" width="5" height="32" fill="#a83a3a"/><path d="M9 13C9 5 12 2.5 15.5 2.5S22 5 22 13V20H9z" fill="#6a2420"/><ellipse cx="15.5" cy="11" rx="5.2" ry="6.8" fill="#caa08a"/><path d="M10 5.5C11 2.5 13 1.8 15.5 1.8S20 2.5 21 5.5C19 4.2 17 3.8 15.5 3.8S12 4.2 10 5.5z" fill="#f2dada"/><rect x="13" y="16" width="5" height="4" fill="#c09080"/><path d="M1 32C1 24 6 19 12 18.5L15.5 21L19 18.5C25 19 30 24 30 32z" fill="#f3cadb"/></g></g></svg>
<div class="t" style="left:317.5px;top:673px;font-size:9px;line-height:10px;color:#ececec;letter-spacing:0;word-spacing:1px;transform:scaleX(0.86);transform-origin:0 0;-webkit-text-stroke:0.15px #ececec">ANI PARAMESWARAN</div>
<svg class="a" style="left:405px;top:673px" width="10" height="11"><path d="M3.3 6V2.6a1.6 1.6 0 0 1 3.2 0V5" fill="none" stroke="#d6d6d6" stroke-width="1"/><path d="M1.8 5.5a3.2 3.2 0 0 0 4.5 3M8 5.3a3.2 3.2 0 0 1 -0.4 1.5" fill="none" stroke="#cfcfcf" stroke-width="0.9"/><path d="M0.8 10.2L9 0.8" stroke="#e6e6e6" stroke-width="1"/></svg>
<div class="t" style="left:442.5px;top:673px;font-size:9px;line-height:10px;color:#ececec;letter-spacing:0;word-spacing:1px;transform:scaleX(0.86);transform-origin:0 0;-webkit-text-stroke:0.15px #ececec">AJAY KUMAR KUSHWAHA</div>
<div class="t" style="left:567.5px;top:673px;font-size:9px;line-height:10px;color:#ececec;letter-spacing:0;word-spacing:1px;transform:scaleX(0.86);transform-origin:0 0;-webkit-text-stroke:0.15px #ececec">ARSHIA JOSE</div>
<svg class="a" style="left:622px;top:673px" width="10" height="11"><path d="M3.3 6V2.6a1.6 1.6 0 0 1 3.2 0V5" fill="none" stroke="#d6d6d6" stroke-width="1"/><path d="M1.8 5.5a3.2 3.2 0 0 0 4.5 3M8 5.3a3.2 3.2 0 0 1 -0.4 1.5" fill="none" stroke="#cfcfcf" stroke-width="0.9"/><path d="M0.8 10.2L9 0.8" stroke="#e6e6e6" stroke-width="1"/></svg>
<div class="t" style="left:692.5px;top:673px;font-size:9px;line-height:10px;color:#ececec;letter-spacing:0;word-spacing:1px;transform:scaleX(0.86);transform-origin:0 0;-webkit-text-stroke:0.15px #ececec">SHAMBHAVI SHARMA</div>
<svg class="a" style="left:781px;top:673px" width="10" height="11"><path d="M3.3 6V2.6a1.6 1.6 0 0 1 3.2 0V5" fill="none" stroke="#d6d6d6" stroke-width="1"/><path d="M1.8 5.5a3.2 3.2 0 0 0 4.5 3M8 5.3a3.2 3.2 0 0 1 -0.4 1.5" fill="none" stroke="#cfcfcf" stroke-width="0.9"/><path d="M0.8 10.2L9 0.8" stroke="#e6e6e6" stroke-width="1"/></svg>

<svg class="a" style="left:807px;top:621px" width="125" height="65">
<defs><filter id="bl" x="-5%" y="-5%" width="110%" height="110%"><feGaussianBlur stdDeviation="1.2"/></filter>
<radialGradient id="mf" cx="0.5" cy="0.45" r="0.6"><stop offset="0" stop-color="#c8a08e"/><stop offset="1" stop-color="#a27464"/></radialGradient>
<linearGradient id="mwall" x1="0" y1="0" x2="1" y2="0"><stop offset="0" stop-color="#d9c4bd"/><stop offset="0.7" stop-color="#e2ccc6"/><stop offset="1" stop-color="#c8aea6"/></linearGradient></defs>
<g filter="url(#bl)">
<rect x="-3" y="-3" width="131" height="71" fill="url(#mwall)"/>
<rect x="23" y="8" width="32" height="33" rx="3" fill="#d9e2ec"/>
<rect x="98" y="-3" width="30" height="71" fill="#342c2c"/>
<path d="M30 68C32 52 40 44 54 41L70 39L86 42C98 46 103 55 105 68z" fill="#8d8983"/>
<path d="M60 44L62 68H77L78 44z" fill="#6e2a32"/>
<path d="M56 44L62 68L52 48z" fill="#a5a19a"/>
<path d="M80 44L76 68L88 48z" fill="#a5a19a"/>
<path d="M53 28C51 14 57 6 68 6C80 6 86 14 85 26C85 32 84 36 82 40L56 40C54 36 53 32 53 28z" fill="#2a201f"/>
<ellipse cx="68.5" cy="27.5" rx="11" ry="14" fill="url(#mf)"/>
<path d="M56 22C57 12 62 9 69 9C76 9 81 12 82 21C78 15 73 13 68 13C62 13 58 16 56 22z" fill="#2a201f"/>
<path d="M62 24h4M72 24h4" stroke="#5a3a30" stroke-width="1.2"/>
<rect x="63" y="40" width="11" height="6" fill="#b08070"/>
</g></svg>

<div class="t" style="left:817px;top:673px;font-size:9px;line-height:10px;color:#fafafa;letter-spacing:0;word-spacing:1px;transform:scaleX(0.86);transform-origin:0 0;-webkit-text-stroke:0.15px #fafafa">MEGHNA SOOD</div>
<svg class="a" style="left:932px;top:621px" width="125" height="65">
<defs><radialGradient id="zf" cx="0.5" cy="0.45" r="0.6"><stop offset="0" stop-color="#c09484"/><stop offset="1" stop-color="#9c7060"/></radialGradient></defs>
<g filter="url(#bl)">
<rect x="-3" y="-3" width="131" height="71" fill="#e4d8d7"/>
<rect x="-3" y="-3" width="32" height="15" fill="#cfbdb4"/>
<rect x="-3" y="11" width="31" height="57" fill="#8a7a70"/>
<rect x="1" y="15" width="26" height="53" fill="#c4cfc4"/>
<path d="M3 34C8 26 18 26 25 34" fill="none" stroke="#8a9a88" stroke-width="1.5"/>
<rect x="25" y="-3" width="14" height="48" fill="#8a4a4c"/>
<rect x="29" y="2" width="5" height="40" fill="#e2d6d6"/>
<rect x="100" y="-3" width="28" height="71" fill="#e6dada"/>
<rect x="72" y="32" width="14" height="6" fill="#5a6a90"/>
<path d="M8 68C10 54 24 46 44 42L74 42C96 44 112 54 122 68z" fill="#6a1c26"/>
<path d="M45 37L59 56L73 37z" fill="#e8ecf2"/>
<rect x="56" y="48" width="5" height="6" fill="#4a6a7a"/>
<path d="M39 20C38 4 46 -3 58 -3C70 -3 78 4 77 18C77 26 76 32 73 36H44C41 32 39 26 39 20z" fill="#2a1f1e"/>
<ellipse cx="58" cy="19" rx="15" ry="18" fill="url(#zf)"/>
<path d="M43 10C45 2 50 -1 58 -1C66 -1 72 2 74 10C70 6 64 4 58 4C52 4 47 6 43 10z" fill="#2a1f1e"/>
<path d="M49 13h6M62 13h6" stroke="#4a2a22" stroke-width="1.3"/>
<path d="M50 68C50 56 55 50 62 50C69 50 74 56 74 68z" fill="#c9a696"/>
<circle cx="86.7" cy="58" r="8" fill="#d6d04e"/><circle cx="86.7" cy="58" r="5.6" fill="#c8d8e4"/>
</g></svg>

<div class="t" style="left:942px;top:673px;font-size:9px;line-height:10px;color:#fafafa;letter-spacing:0;word-spacing:1px;transform:scaleX(0.86);transform-origin:0 0;-webkit-text-stroke:0.15px #fafafa">ZAINAB KHAN</div>

<div class="a" style="left:0;top:0;width:1px;height:686px;background:#121212"></div>
<div class="a" style="left:1279px;top:0;width:1px;height:686px;background:#161616"></div>
<div id="wtb" class="a"></div>
<!-- windows taskbar -->
<svg class="a" style="left:12px;top:696px" width="16" height="15"><path d="M0.5 2L6.8 1.1V7H0.5zM7.8 1L15 0V7H7.8zM0.5 8H6.8V13.9L0.5 13zM7.8 8H15V15L7.8 14z" fill="#101010"/></svg>
<svg class="a" style="left:50px;top:694px" width="18" height="18"><circle cx="11" cy="7" r="5" fill="none" stroke="#1a1a1a" stroke-width="1.3"/><path d="M7.3 10.7L2 16" stroke="#1a1a1a" stroke-width="1.4"/></svg>
<svg class="a" style="left:92px;top:696px" width="16" height="16"><circle cx="8" cy="8" r="6" fill="none" stroke="#111" stroke-width="2"/></svg>
<svg class="a" style="left:132px;top:696px" width="16" height="15"><path d="M1 1.3H10M1 13.7H10" stroke="#1a1a1a" stroke-width="1.3"/><rect x="1.5" y="4" width="8" height="6.5" fill="none" stroke="#1a1a1a" stroke-width="1.4"/><path d="M13.5 1V14" stroke="#1a1a1a" stroke-width="1.2"/><rect x="12.3" y="5" width="2.4" height="2.4" fill="#1a1a1a"/></svg>
<div class="a" style="left:163px;top:695px;width:1px;height:16px;background:#222"></div>
<div class="a" style="left:166px;top:695px;width:1px;height:16px;background:#222"></div>
<svg class="a" style="left:186px;top:694px" width="20" height="17"><path d="M0.5 1.5a1 1 0 0 1 1 -1h5l1.5 1.5H19V14H0.5z" fill="#e2a81a"/><rect x="0.5" y="3" width="19" height="11.5" rx="1" fill="#fbcd5a"/><path d="M4 16.5V9H16V16.5H12.5V12H7.5V16.5z" fill="#3c87c9"/><rect x="7.5" y="12" width="5" height="3" fill="#fcd468"/></svg>
<svg class="a" style="left:227px;top:693px" width="21" height="20"><path d="M0.5 7.5L10.5 0.5L20.5 7.5V19.5H0.5z" fill="#0f5aa8"/><path d="M1.5 7.5H19.5L10.5 13z" fill="#ffffff"/><path d="M0.5 7.5L10.5 14L20.5 7.5V19.5H0.5z" fill="#23a6e8"/><path d="M0.5 19.5L20.5 7.5V19.5z" fill="#1388d8"/></svg>
<svg class="a" style="left:268px;top:693px" width="21" height="20" viewBox="0 0 21.4 20.4"><defs><linearGradient id="eg2a" x1="0" y1="0" x2="0" y2="1"><stop offset="0" stop-color="#2aa6e6"/><stop offset="1" stop-color="#0b4a98"/></linearGradient><linearGradient id="eg2b" x1="0" y1="0" x2="1" y2="0.6"><stop offset="0" stop-color="#27b4e4"/><stop offset="0.5" stop-color="#2cc0c0"/><stop offset="1" stop-color="#56dc5a"/></linearGradient></defs><circle cx="10.7" cy="10.2" r="10" fill="url(#eg2a)"/><path d="M1 8.5C2.5 3.2 6.3 0.2 10.7 0.2C16.5 0.2 20.7 4.6 20.7 9.8C20.7 13.2 18.2 15 15.3 15C12.3 15 10.8 13.2 11.4 11.6C12 10 13.6 9.8 13.3 8.3C12.8 6.3 9.5 5.4 6.5 6C4.2 6.5 2.3 7.3 1 8.5z" fill="url(#eg2b)"/><path d="M8.3 10.8C8.3 9.3 9.4 8.3 10.8 8.3C12 8.3 12.8 9 13 9.8C11.8 10.4 11.2 11.2 11.4 12.2C11.9 14.3 14.3 15.3 16.5 15.2C18 15.1 19.4 14.6 20.3 13.8C19.6 15.2 18.2 16.1 16.5 16.2C12.3 16.5 8.3 14.5 8.3 10.8z" fill="#dce6ec"/></svg>
<div class="a" style="left:310px;top:693px;width:20px;height:20px;background:#28a6d6"></div>
<svg class="a" style="left:310px;top:693px" width="20" height="20"><path d="M8 3.5H10.5V13H15.5V15.5H6.5z" fill="#fff"/><path d="M8 3.5L5 16H8z" fill="#0d3a66"/></svg>
<div class="a" style="left:341px;top:687px;width:38px;height:33px;background:#e4edf0"></div>
<svg class="a" style="left:350px;top:693px" width="22" height="21"><circle cx="11" cy="3.8" r="3" fill="#7b83eb"/><circle cx="17" cy="5" r="2.2" fill="#5059c9"/><rect x="13.5" y="8" width="6" height="8" rx="2" fill="#5059c9"/><rect x="6" y="7.5" width="10" height="11" rx="3" fill="#7b83eb"/><rect x="1" y="5.5" width="10" height="10" rx="1" fill="#4b53bc"/><text x="3.3" y="13.6" font-size="8.5" font-weight="bold" fill="#fff" font-family="Liberation Sans">T</text><circle cx="17.3" cy="16.2" r="4.6" fill="#f4f7f9"/><circle cx="17.3" cy="16.2" r="3.6" fill="#d40f1f"/></svg>
<svg class="a" style="left:393px;top:693px" width="20" height="20"><rect x="0.5" y="0.5" width="19" height="19" rx="1.2" fill="#2ea2e8"/><path d="M0.5 19.5V13L7 7L14 14L19.5 11V19.5z" fill="#4a7ad8"/><path d="M0.5 19.5V13L7 7L17 19.5z" fill="#163f80"/><rect x="12" y="3.5" width="3" height="3" fill="#e8f6ff"/></svg>
<div class="a" style="left:179px;top:718px;width:34px;height:2px;background:#0067c0"></div>
<div class="a" style="left:262px;top:718px;width:34px;height:2px;background:#0067c0"></div>
<div class="a" style="left:341px;top:718px;width:38px;height:2px;background:#0067c0"></div>
<div class="a" style="left:386px;top:718px;width:34px;height:2px;background:#0067c0"></div>
<!-- right -->
<div class="a" style="left:928px;top:695px;width:1px;height:16px;background:#222"></div>
<div class="a" style="left:931px;top:695px;width:1px;height:16px;background:#222"></div>
<div class="t" style="left:936.5px;top:697px;font-size:11px;line-height:13px;color:#2a2a2a;letter-spacing:-0.3px">Desktop</div>
<svg class="a" style="left:980px;top:688px" width="9" height="6"><path d="M0.8 0.8L3 3L0.8 5.2M4.8 0.8L7 3L4.8 5.2" fill="none" stroke="#6a7aa8" stroke-width="1"/></svg>
<div class="a" style="left:991px;top:695px;width:41px;height:16px;background:#fff"></div>
<div class="a" style="left:993px;top:697px;width:22px;height:12px;background:#16a04a"></div>
<div class="a" style="left:1015px;top:697px;width:15px;height:12px;background:#000"></div>
<div class="t" style="left:1000px;top:696.5px;font-size:11.5px;line-height:13px;color:#e8f4ea">64%</div>
<svg class="a" style="left:1054px;top:699px" width="12" height="8"><path d="M1 6.5L6 1.5L11 6.5" fill="none" stroke="#222" stroke-width="1.2"/></svg>
<svg class="a" style="left:1074px;top:695px" width="11" height="16"><rect x="3" y="0.5" width="5" height="9.5" rx="1.2" fill="#111"/><path d="M1 7.5a4.5 4.5 0 0 0 9 0" fill="none" stroke="#222" stroke-width="1.1"/><path d="M5.5 12V14.5M3 14.5H8" stroke="#222" stroke-width="1.1"/></svg>
<svg class="a" style="left:1093px;top:699px" width="15" height="9"><rect x="1" y="1" width="11.5" height="7" fill="none" stroke="#1a1a1a" stroke-width="1.2"/><rect x="2" y="2" width="6" height="5" fill="#111"/><rect x="12.5" y="3" width="1.5" height="3" fill="#1a1a1a"/></svg>
<svg class="a" style="left:1114px;top:697px" width="13" height="12"><path d="M1 11a10 10 0 0 1 10.5 -10M3.5 11a7.5 7.5 0 0 1 8 -7.5M6 11a5 5 0 0 1 5.5 -5" fill="none" stroke="#333" stroke-width="1"/><circle cx="10.5" cy="10" r="1.3" fill="#111"/></svg>
<svg class="a" style="left:1132px;top:696px" width="16" height="14"><path d="M1 5H3.5L7 1.5V12.5L3.5 9H1z" fill="none" stroke="#222" stroke-width="1.1"/><path d="M9 5a2.8 2.8 0 0 1 0 4M11 3.5a5.5 5.5 0 0 1 0 7M13 2a8 8 0 0 1 0 10" fill="none" stroke="#222" stroke-width="1.1"/></svg>
<div class="t" style="left:1155.5px;top:697.5px;font-size:10px;line-height:12px;color:#2a2a2a;letter-spacing:-0.6px">ENG</div>
<div class="t" style="left:1191px;top:690px;font-size:10px;line-height:12px;color:#2a2a2a;letter-spacing:-0.3px">3:35 PM</div>
<div class="t" style="left:1186px;top:705.5px;font-size:10px;line-height:12px;color:#2a2a2a;letter-spacing:-0.2px">1/19/2021</div>
<svg class="a" style="left:1245px;top:695px" width="16" height="17"><path d="M1 1H15V12H9.5L7.5 15L5.5 12H1z" fill="none" stroke="#222" stroke-width="1.1" stroke-linejoin="round"/></svg>
<div class="a" style="left:1276px;top:687px;width:1px;height:33px;background:#b8c4cc"></div>

</body></html>
